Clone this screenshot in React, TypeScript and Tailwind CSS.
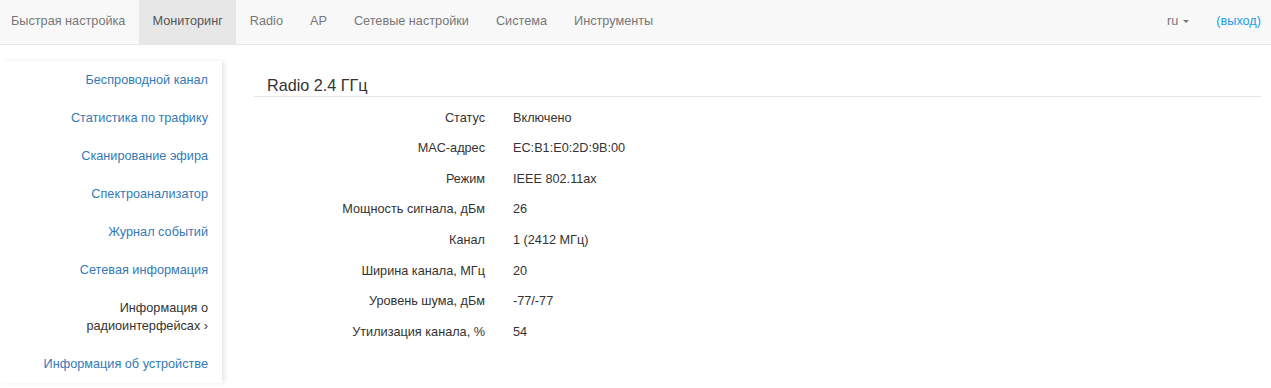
import React from "react";

const navItems = ["Быстрая настройка", "Мониторинг", "Radio", "AP", "Сетевые настройки", "Система", "Инструменты"];

const sideItems: { label: React.ReactNode; active?: boolean }[] = [
  { label: "Беспроводной канал" },
  { label: "Статистика по трафику" },
  { label: "Сканирование эфира" },
  { label: "Спектроанализатор" },
  { label: "Журнал событий" },
  { label: "Сетевая информация" },
  { label: (<>Информация о<br />радиоинтерфейсах ›</>), active: true },
  { label: "Информация об устройстве" },
];

const rows: [string, string][] = [
  ["Статус", "Включено"],
  ["MAC-адрес", "EC:B1:E0:2D:9B:00"],
  ["Режим", "IEEE 802.11ax"],
  ["Мощность сигнала, дБм", "26"],
  ["Канал", "1 (2412 МГц)"],
  ["Ширина канала, МГц", "20"],
  ["Уровень шума, дБм", "-77/-77"],
  ["Утилизация канала, %", "54"],
];

export default function App() {
  return (
    <div className="w-[1271px] h-[388px] bg-white overflow-hidden text-[12.7px] text-[#333]" style={{ fontFamily: '"Liberation Sans", Arial, sans-serif' }}>
      <div className="h-[45px] bg-[#f8f8f8] border-b border-[#e7e7e7] flex items-stretch">
        <div className="flex items-stretch">
          {navItems.map((n, i) => (
            <div
              key={n}
              className={`flex items-center h-[44px] pr-[13.5px] ${i === 0 ? "pl-[11px]" : "pl-[13.5px]"} ${n === "Мониторинг" ? "bg-[#e7e7e7] text-[#555]" : "text-[#777]"}`}
            >
              {n}
            </div>
          ))}
        </div>
        <div className="ml-auto flex items-center pr-[10px] h-[44px]">
          <div className="flex items-center text-[#777]">
            ru
            <span className="ml-[5px] inline-block w-0 h-0 border-l-[3px] border-r-[3px] border-t-[3px] border-l-transparent border-r-transparent border-t-[#777]"></span>
          </div>
          <div className="ml-[27px] text-[#1b9de6]">(выход)</div>
        </div>
      </div>
      <div className="flex">
        <div className="w-[222px] mt-[16px] bg-white shadow-[3px_0_5px_-1px_rgba(0,0,0,0.12)] self-start">
          {sideItems.map((s, i) => (
            <div
              key={i}
              className={`text-right pr-[14px] py-[10px] leading-[18px] ${s.active ? "text-[#333]" : "text-[#337ab7]"}`}
            >
              {s.label}
            </div>
          ))}
        </div>
        <div className="ml-[32px] mr-[10px] flex-1">
          <div className="mt-[30px] pl-[13px] text-[16.2px] leading-[20px] pb-[1px] border-b border-[#e5e5e5]">Radio 2.4 ГГц</div>
          <div className="mt-[6px]">
            {rows.map(([k, v]) => (
              <div key={k} className="flex h-[30.57px] items-center">
                <div className="w-[231px] text-right">{k}</div>
                <div className="ml-[28px]">{v}</div>
              </div>
            ))}
          </div>
        </div>
      </div>
    </div>
  );
}
